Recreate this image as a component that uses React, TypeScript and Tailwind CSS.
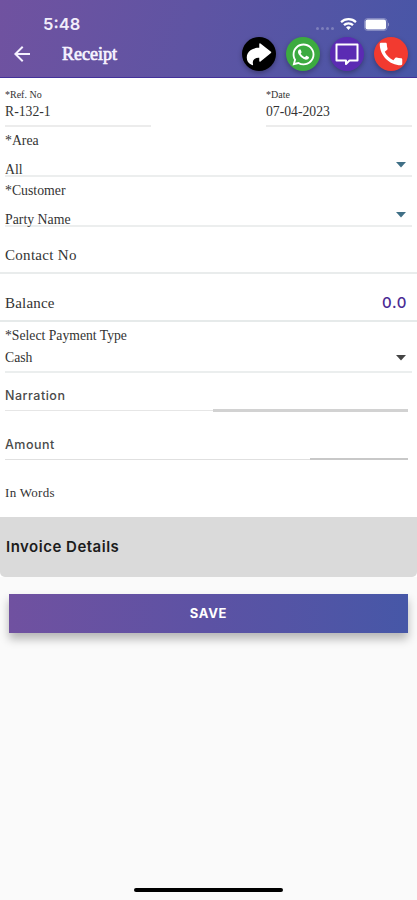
import type { ReactNode } from "react";
import { FaWhatsapp } from "react-icons/fa";
import { MdCall, MdArrowBack } from "react-icons/md";

const serif = "font-['Liberation_Serif',serif] text-[#333] whitespace-nowrap";
const sans = "font-[Inter,sans-serif] whitespace-nowrap";

export default function App() {
  return (
    <div className="flex h-[900px] w-[417px] flex-col overflow-hidden bg-[#fafafa]">
      <Header />
      <main className="flex flex-col bg-white">
        <div className="flex h-[49px] justify-between px-[5px]">
          <SmallField label="*Ref. No" value="R-132-1" />
          <SmallField label="*Date" value="07-04-2023" />
        </div>
        <Picker label="*Area" value="All" />
        <Picker label="*Customer" value="Party Name" />
        <div className="flex h-[47px] items-center border-b-2 border-[#e9ecec] px-[5px] pt-[11px]">
          <span className={`${serif} text-[15px] leading-5 tracking-[0.3px]`}>Contact No</span>
        </div>
        <div className="flex h-12 items-center justify-between border-b-2 border-[#e6eaea] pl-[5px] pr-[10px] pt-[12px]">
          <span className={`${serif} text-[15px] leading-5 tracking-[0.2px]`}>Balance</span>
          <span className={`${sans} text-[15px] font-medium leading-5 tracking-[0.6px] text-[#4a2a94]`}>0.0</span>
        </div>

        <div className="px-[5px]">
          <div className="flex h-[51px] flex-col border-b-2 border-[#ebeeee] pt-1">
            <span className={`${serif} text-[13.7px] leading-5`}>*Select Payment Type</span>
            <div className="mt-[2px] flex items-center justify-between pr-[6px]">
              <span className={`${serif} text-[13.7px] leading-5`}>Cash</span>
              <Caret className="fill-[#444]" />
            </div>
          </div>
        </div>

        <div className="flex h-[39px] flex-col justify-between pl-[5px] pr-[9px] pt-[13px]">
          <span className={`${sans} text-[12.5px] font-medium leading-5 tracking-[0.5px] text-[#4a4a4a]`}>Narration</span>
          <div className="flex items-center">
            <div className="h-px w-52 bg-[#e6e6e6]" />
            <div className="h-[3px] flex-1 bg-[#d2d2d2]" />
          </div>
        </div>
        <div className="flex h-[48px] flex-col justify-between pl-[5px] pr-[9px] pt-[23px]">
          <span className={`${sans} text-[12.5px] font-medium leading-5 tracking-[0.5px] text-[#4a4a4a]`}>Amount</span>
          <div className="flex items-center">
            <div className="h-px w-[305px] bg-[#e0e0e0]" />
            <div className="h-[2px] flex-1 bg-[#c8c8c8]" />
          </div>
        </div>
        <div className="h-[57px] px-[5px] pt-[23px]">
          <p className={`${serif} text-[13px] leading-5 tracking-[0.3px]`}>In Words</p>
        </div>

        <section className="flex h-[60px] items-center rounded-b-[5px] bg-[#dadada] px-[6px]">
          <h2 className={`${sans} text-[15px] font-semibold leading-5 tracking-[0.5px] text-[#1c1c1c]`}>Invoice Details</h2>
        </section>
      </main>

      <div className="px-[9px] pt-[17px]">
        <button
          className={`${sans} h-[39px] w-full bg-linear-to-r from-[#7051a0] via-[#5c52a4] to-[#4657a7] text-[13px] font-bold tracking-[0.7px] text-white shadow-[0_6px_9px_rgba(0,0,0,0.28)]`}
        >
          SAVE
        </button>
      </div>

      <div className="mt-auto flex justify-center pb-[8px]">
        <div className="h-1 w-[149px] rounded-full bg-black" />
      </div>
    </div>
  );
}

function Header() {
  return (
    <header className="flex h-[78px] shrink-0 flex-col border-b border-[#43319a] bg-[linear-gradient(105deg,#7052a0_0%,#5f54a3_45%,#4856a7_100%)]">
      <div className="flex h-9 items-start justify-between pl-[43px] pr-[27px] pt-[14px]">
        <span className={`${sans} text-[16.5px] font-semibold leading-5 text-[#f1edfa]`}>5:48</span>
        <div className="flex items-center pt-[4px]">
          <div className="mr-[6px] mt-[8px] flex gap-[2px]">
            {[0, 1, 2, 3].map((n) => (
              <span key={n} className="size-[3px] rounded-full bg-white/25" />
            ))}
          </div>
          <svg width="17" height="13" viewBox="0 0 17 13" className="fill-white">
            <path d="M8.5 0C5.3 0 2.4 1.2.3 3.3l1.5 1.6a9.5 9.5 0 0 1 13.4 0l1.5-1.6A11.6 11.6 0 0 0 8.5 0Z" />
            <path d="M8.5 4.2c-2 0-3.9.8-5.3 2.1l1.6 1.6a5.3 5.3 0 0 1 7.4 0l1.6-1.6a7.7 7.7 0 0 0-5.3-2.1Z" />
            <path d="M8.5 8.3c-.9 0-1.8.4-2.4 1l2.4 2.6 2.4-2.6c-.6-.6-1.5-1-2.4-1Z" />
          </svg>
          <svg width="26" height="13" viewBox="0 0 26 13" className="ml-[7px]">
            <rect x=".5" y=".5" width="22.5" height="12" rx="3" className="fill-none stroke-white/30" />
            <rect x="1.5" y="1.5" width="20.5" height="10" rx="2" className="fill-white" />
            <path d="M24 4.5c1.5.6 1.5 3.4 0 4Z" className="fill-white/40" />
          </svg>
        </div>
      </div>
      <div className="flex h-9 items-center pl-[10px] pr-[9px]">
        <MdArrowBack className="size-6 text-[#f5f1ff]" />
        <h1 className="ml-[28px] font-['Liberation_Serif',serif] text-[18px] leading-6 text-[#f7f4ff] [-webkit-text-stroke:0.7px_#f7f4ff]">
          Receipt
        </h1>
        <div className="ml-auto flex gap-[10px]">
          <Round className="bg-black">
            <svg width="34" height="34" viewBox="0 0 34 34" fill="white" stroke="white" strokeWidth="1.5" strokeLinejoin="round">
              <path d="M28.5 15.3 18 7v4.3C10.5 11.5 5.500 15 5.500 20.500c0 3 1.800 5.700 4.800 6.900-1.200-4.700 1.700-7.500 7.700-7.700V24Z" />
            </svg>
          </Round>
          <Round className="bg-[#3cab40]">
            <FaWhatsapp className="size-[25px]" />
          </Round>
          <Round className="bg-[#5b2bb3]">
            <svg width="24" height="24" viewBox="0 0 24 24" fill="none" stroke="white" strokeWidth="2" strokeLinejoin="round">
              <path d="M1.5 2.5h21v16h-8L11 22V18.5H1.5Z" />
            </svg>
          </Round>
          <Round className="bg-[#f23a30]">
            <MdCall className="size-[30px]" />
          </Round>
        </div>
      </div>
    </header>
  );
}

function Round({ className, children }: { className: string; children: ReactNode }) {
  return (
    <button
      className={`flex size-[34px] items-center justify-center rounded-full text-white shadow-[0_2px_5px_rgba(0,0,0,0.3)] ${className}`}
    >
      {children}
    </button>
  );
}

function SmallField({ label, value }: { label: string; value: string }) {
  return (
    <div className="flex w-[146px] flex-col border-b-2 border-[#ececec] pt-[11px]">
      <span className={`${serif} text-[10px] leading-3`}>{label}</span>
      <span className={`${serif} mt-px text-[13.7px] leading-5`}>{value}</span>
    </div>
  );
}

function Picker({ label, value }: { label: string; value: string }) {
  return (
    <div className="h-[50px] px-[5px]">
      <div className="flex h-full flex-col justify-between border-b-2 border-[#eceeee] pt-[4px]">
        <span className={`${serif} text-[13.8px] leading-5`}>{label}</span>
        <div className="flex h-4 items-center justify-between pr-[6px]">
          <span className={`${serif} mt-[5px] text-[13.8px] leading-4`}>{value}</span>
          <Caret className="mb-[4px] fill-[#3f6f86]" />
        </div>
      </div>
    </div>
  );
}

function Caret({ className }: { className: string }) {
  return (
    <svg width="10" height="6" viewBox="0 0 10 6" className={className}>
      <path d="M0 0h10L5 5.5Z" />
    </svg>
  );
}
